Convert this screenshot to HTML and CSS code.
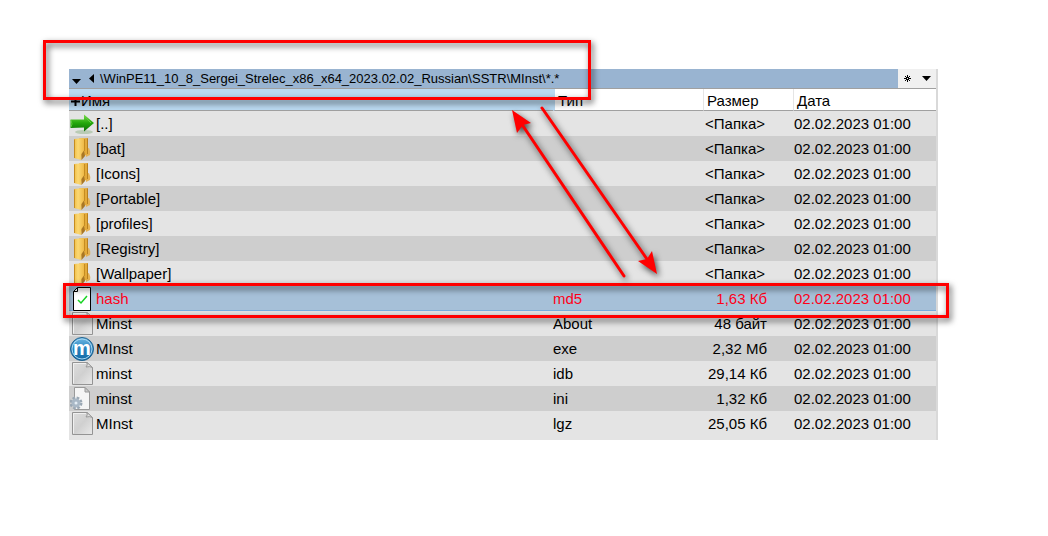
FILE: index.html
```
<!DOCTYPE html>
<html lang="ru">
<head>
    <meta charset="UTF-8">
    <title>MInst</title>
    <link rel="stylesheet" href="styles.css">
</head>
<body>
    <!-- File type icons -->
    <svg class="icons" width="0" height="0" aria-hidden="true">
        <defs>
            <linearGradient id="green" x1="0" y1="0" x2="0" y2="1">
                <stop offset="0" stop-color="#7bdc4c"/>
                <stop offset="0.5" stop-color="#24a80c"/>
                <stop offset="1" stop-color="#0b6d05"/>
            </linearGradient>
            <linearGradient id="gold" x1="0" y1="0" x2="1" y2="0">
                <stop offset="0" stop-color="#f0bd45"/>
                <stop offset="0.4" stop-color="#fbd873"/>
                <stop offset="1" stop-color="#efba48"/>
            </linearGradient>
            <linearGradient id="paper" x1="0" y1="0" x2="1" y2="1">
                <stop offset="0" stop-color="#dedede"/>
                <stop offset="0.5" stop-color="#d0d0d0"/>
                <stop offset="1" stop-color="#e9e9e9"/>
            </linearGradient>
            <linearGradient id="blue" x1="0" y1="0" x2="0" y2="1">
                <stop offset="0" stop-color="#70b9e4"/>
                <stop offset="0.5" stop-color="#2682bd"/>
                <stop offset="1" stop-color="#1469a5"/>
            </linearGradient>
            <symbol id="up" viewBox="0 0 24 24">
                <ellipse cx="14" cy="20" rx="9" ry="2" fill="#b9cbb5"/>
                <path d="M0.500 7.500L14 7.500V2.500L24 11L14 19.500V15.500L0.500 16Z" fill="url(#green)"/>
                <path d="M1 8L2 12L1 15M15 5L21 11" fill="none" stroke="#5fca3c"/>
            </symbol>
            <symbol id="folder" viewBox="0 0 24 24">
                <path d="M16 12L19 11Q21 15 20 18L16 20Z" fill="#e5b254"/>
                <path d="M9 1.500L18 1V17L14 19L9 20Z" fill="#e3aa3a"/>
                <path d="M17.500 1.500V17" stroke="#b9801d"/>
                <path d="M4 2L14 1V14L11.500 17V23L4 21Z" fill="url(#gold)"/>
                <path d="M14 13.500L11.500 17V23L15 19Z" fill="#a97724"/>
                <path d="M14.500 2V14M4.500 2.500V21" stroke="#c58d22"/>
            </symbol>
            <symbol id="checked" viewBox="0 0 24 24">
                <path d="M7.500 0.500H20.500V23.500H3.500V4.500Z" fill="#fff" stroke="#000"/>
                <path d="M3.500 4.500H7.500V0.500" fill="none" stroke="#000"/>
                <path d="M8 13L11 16L17 9" fill="none" stroke="#16d322" stroke-width="1.500"/>
            </symbol>
            <symbol id="blank" viewBox="0 0 24 24">
                <path d="M2.500 0.500H17L22.500 5.500V22.500H2.500Z" fill="url(#paper)" stroke="#949494"/>
                <path d="M3.500 21.500V1.500H16" fill="none" stroke="#f0f0f0"/>
                <path d="M17 0.500Q18 3 16 5Q20 4 22.500 5.500Z" fill="#e2e2e2" stroke="#999"/>
            </symbol>
            <symbol id="app" viewBox="0 0 24 24">
                <circle cx="12" cy="12" r="11.500" fill="url(#blue)" stroke="#22628e"/>
                <circle cx="12" cy="12" r="10" fill="none" stroke="#a8d8f2"/>
                <text class="app-letter" x="12" y="18" text-anchor="middle">m</text>
            </symbol>
            <symbol id="config" viewBox="0 0 24 24">
                <path d="M4.500 0.500H15L19.500 5V22.500H4.500Z" fill="#f5f5f5" stroke="#999"/>
                <path d="M15 0.500V5H19.500Z" fill="#ccc" stroke="#999"/>
                <circle cx="6" cy="16" r="5" fill="none" stroke="#9aa7b3" stroke-width="3" stroke-dasharray="2.500 1.430"/>
                <circle cx="6" cy="16" r="3" fill="#e4edf5" stroke="#a9b8c6" stroke-width="3"/>
            </symbol>
        </defs>
    </svg>

    <main class="panel">
        <header class="path-bar">
            <button type="button" class="path-button" aria-label="История">
                <svg width="9" height="5" viewBox="0 0 9 5"><path d="M0 0H9L4.500 5Z"/></svg>
            </button>
            <button type="button" class="path-button back" aria-label="Назад">
                <svg width="5" height="9" viewBox="0 0 5 9"><path d="M5 0V9L0 4.500Z"/></svg>
            </button>
            <span class="path">\WinPE11_10_8_Sergei_Strelec_x86_x64_2023.02.02_Russian\SSTR\MInst\*.*</span>
            <div class="path-tools">
                <button type="button" aria-label="Избранное">
                    <svg width="7" height="7" viewBox="0 0 7 7"><path d="M3.500 0V7M0 3.500H7M1 1L6 6M6 1L1 6" stroke="#000"/><path d="M3 3H4V4H3Z" fill="#fff"/></svg>
                </button>
                <button type="button" aria-label="Каталоги">
                    <svg width="9" height="5" viewBox="0 0 9 5"><path d="M0 0H9L4.500 5Z"/></svg>
                </button>
            </div>
        </header>

        <table class="files">
            <colgroup>
                <col>
                <col class="col-type">
                <col class="col-size">
                <col class="col-date">
            </colgroup>
            <thead>
                <tr>
                    <th class="sorted"><svg width="9" height="9" viewBox="0 0 9 9"><path d="M4.500 0V9M0 4.500H9" stroke="#000" stroke-width="2"/></svg>Имя</th>
                    <th class="type">Тип</th>
                    <th class="divided">Размер</th>
                    <th class="divided">Дата</th>
                </tr>
            </thead>
            <tbody>
                <tr><td><div class="name"><svg><use href="#up"/></svg>[..]</div></td><td></td><td class="size dir">&lt;Папка&gt;</td><td class="date">02.02.2023 01:00</td></tr>
                <tr><td><div class="name"><svg><use href="#folder"/></svg>[bat]</div></td><td></td><td class="size dir">&lt;Папка&gt;</td><td class="date">02.02.2023 01:00</td></tr>
                <tr><td><div class="name"><svg><use href="#folder"/></svg>[Icons]</div></td><td></td><td class="size dir">&lt;Папка&gt;</td><td class="date">02.02.2023 01:00</td></tr>
                <tr><td><div class="name"><svg><use href="#folder"/></svg>[Portable]</div></td><td></td><td class="size dir">&lt;Папка&gt;</td><td class="date">02.02.2023 01:00</td></tr>
                <tr><td><div class="name"><svg><use href="#folder"/></svg>[profiles]</div></td><td></td><td class="size dir">&lt;Папка&gt;</td><td class="date">02.02.2023 01:00</td></tr>
                <tr><td><div class="name"><svg><use href="#folder"/></svg>[Registry]</div></td><td></td><td class="size dir">&lt;Папка&gt;</td><td class="date">02.02.2023 01:00</td></tr>
                <tr><td><div class="name"><svg><use href="#folder"/></svg>[Wallpaper]</div></td><td></td><td class="size dir">&lt;Папка&gt;</td><td class="date">02.02.2023 01:00</td></tr>
                <tr class="selected"><td><div class="name"><svg><use href="#checked"/></svg>hash</div></td><td>md5</td><td class="size">1,63 Кб</td><td class="date">02.02.2023 01:00</td></tr>
                <tr><td><div class="name"><svg><use href="#blank"/></svg>Minst</div></td><td>About</td><td class="size">48 байт</td><td class="date">02.02.2023 01:00</td></tr>
                <tr><td><div class="name"><svg><use href="#app"/></svg>MInst</div></td><td>exe</td><td class="size">2,32 Мб</td><td class="date">02.02.2023 01:00</td></tr>
                <tr><td><div class="name"><svg><use href="#blank"/></svg>minst</div></td><td>idb</td><td class="size">29,14 Кб</td><td class="date">02.02.2023 01:00</td></tr>
                <tr><td><div class="name"><svg><use href="#config"/></svg>minst</div></td><td>ini</td><td class="size">1,32 Кб</td><td class="date">02.02.2023 01:00</td></tr>
                <tr><td><div class="name"><svg><use href="#blank"/></svg>MInst</div></td><td>lgz</td><td class="size">25,05 Кб</td><td class="date">02.02.2023 01:00</td></tr>
            </tbody>
        </table>

        <!-- Red marks over the list -->
        <div class="mark mark-path"></div>
        <div class="mark mark-row"></div>
        <svg class="arrows" width="160" height="180" viewBox="0 0 160 180">
            <g fill="none" stroke="#f00" stroke-width="3" stroke-linecap="round">
                <path d="M123 175L20 22"/>
                <path d="M41 7L148 161"/>
            </g>
            <path d="M11 9L30 22L22 24L16 32Z" fill="#f00"/>
            <path d="M156 173L137 160L146 158L151 150Z" fill="#f00"/>
        </svg>
    </main>
</body>
</html>
```

FILE: styles.css
```
* {
    box-sizing: border-box;
}

body {
    margin: 0;
    padding: 69px 110px 69px 69px;
    background: #fff;
    color: #000;
    font-family: "Liberation Sans", Arial, sans-serif;
    font-size: 15px;
}

.icons {
    position: absolute;
}

.app-letter {
    fill: #fff;
    font-size: 20px;
    font-weight: bold;
}

.panel {
    position: relative;
    min-width: 700px;
    padding-bottom: 4px;
    background: #e4e4e4;
    border-right: 2px solid #d9d9d9;
}

/* Path bar */
.path-bar {
    display: flex;
    align-items: center;
    height: 20px;
    padding-left: 3px;
    background: #99b4d1;
    border-bottom: 1px solid #a0a0a0;
}

button {
    display: flex;
    align-items: center;
    justify-content: center;
    padding: 0;
    border: none;
    background: none;
    cursor: pointer;
}

.path-button {
    width: 9px;
    height: 19px;
    padding-top: 5px;
}

.back {
    width: 5px;
    margin: 0 6px 0 8px;
    padding-top: 0;
}

.path {
    flex: 1;
    font-size: 13px;
    line-height: 19px;
    white-space: nowrap;
}

.path-tools {
    display: flex;
    width: 38px;
    height: 19px;
    background: #f0f0f0;
}

.path-tools button {
    width: 19px;
}

/* File list */
.files {
    width: 100%;
    table-layout: fixed;
    border-collapse: separate;
    border-spacing: 0;
}

.col-type {
    width: 150px;
}

.col-size {
    width: 90px;
}

.col-date {
    width: 143px;
}

th {
    height: 22px;
    padding: 2px 0 0;
    background: #fff;
    border-bottom: 1px solid #a0a0a0;
    font-weight: normal;
    line-height: 19px;
    text-align: left;
}

th.sorted {
    padding-left: 2px;
    background: #bad9f1;
}

.sorted svg {
    margin-right: 1px;
}

th.type {
    padding-left: 3px;
    border-left: 2px solid #bad9f1;
}

th.divided {
    padding-left: 3px;
    border-left: 1px solid #e5e5e5;
}

td {
    height: 25px;
    padding: 0;
    line-height: 25px;
    white-space: nowrap;
}

tbody tr:nth-child(even) {
    background: #cecece;
}

tbody tr.selected {
    background: #a6c0d8;
    color: #ff0019;
}

.selected td {
    box-shadow: inset 0 -1px #78aede;
}

.name {
    display: flex;
    align-items: center;
    gap: 2px;
    height: 25px;
    padding-left: 1px;
}

.name svg {
    width: 24px;
    height: 24px;
}

.size {
    padding-right: 26px;
    text-align: right;
}

.dir {
    padding-right: 28px;
}

.date {
    padding-left: 1px;
}

/* Marks */
.mark {
    position: absolute;
    border: 3px solid #f00;
    filter: drop-shadow(2px 3px 3px rgba(0, 0, 0, 0.7));
}

.mark-path {
    top: -29px;
    left: -26px;
    width: 548px;
    height: 60px;
}

.mark-row {
    top: 214px;
    right: -13px;
    left: -6px;
    height: 35px;
}

.arrows {
    position: absolute;
    top: 32px;
    right: 275px;
    overflow: visible;
    filter: drop-shadow(2px 3px 3px rgba(0, 0, 0, 0.7));
}
```
